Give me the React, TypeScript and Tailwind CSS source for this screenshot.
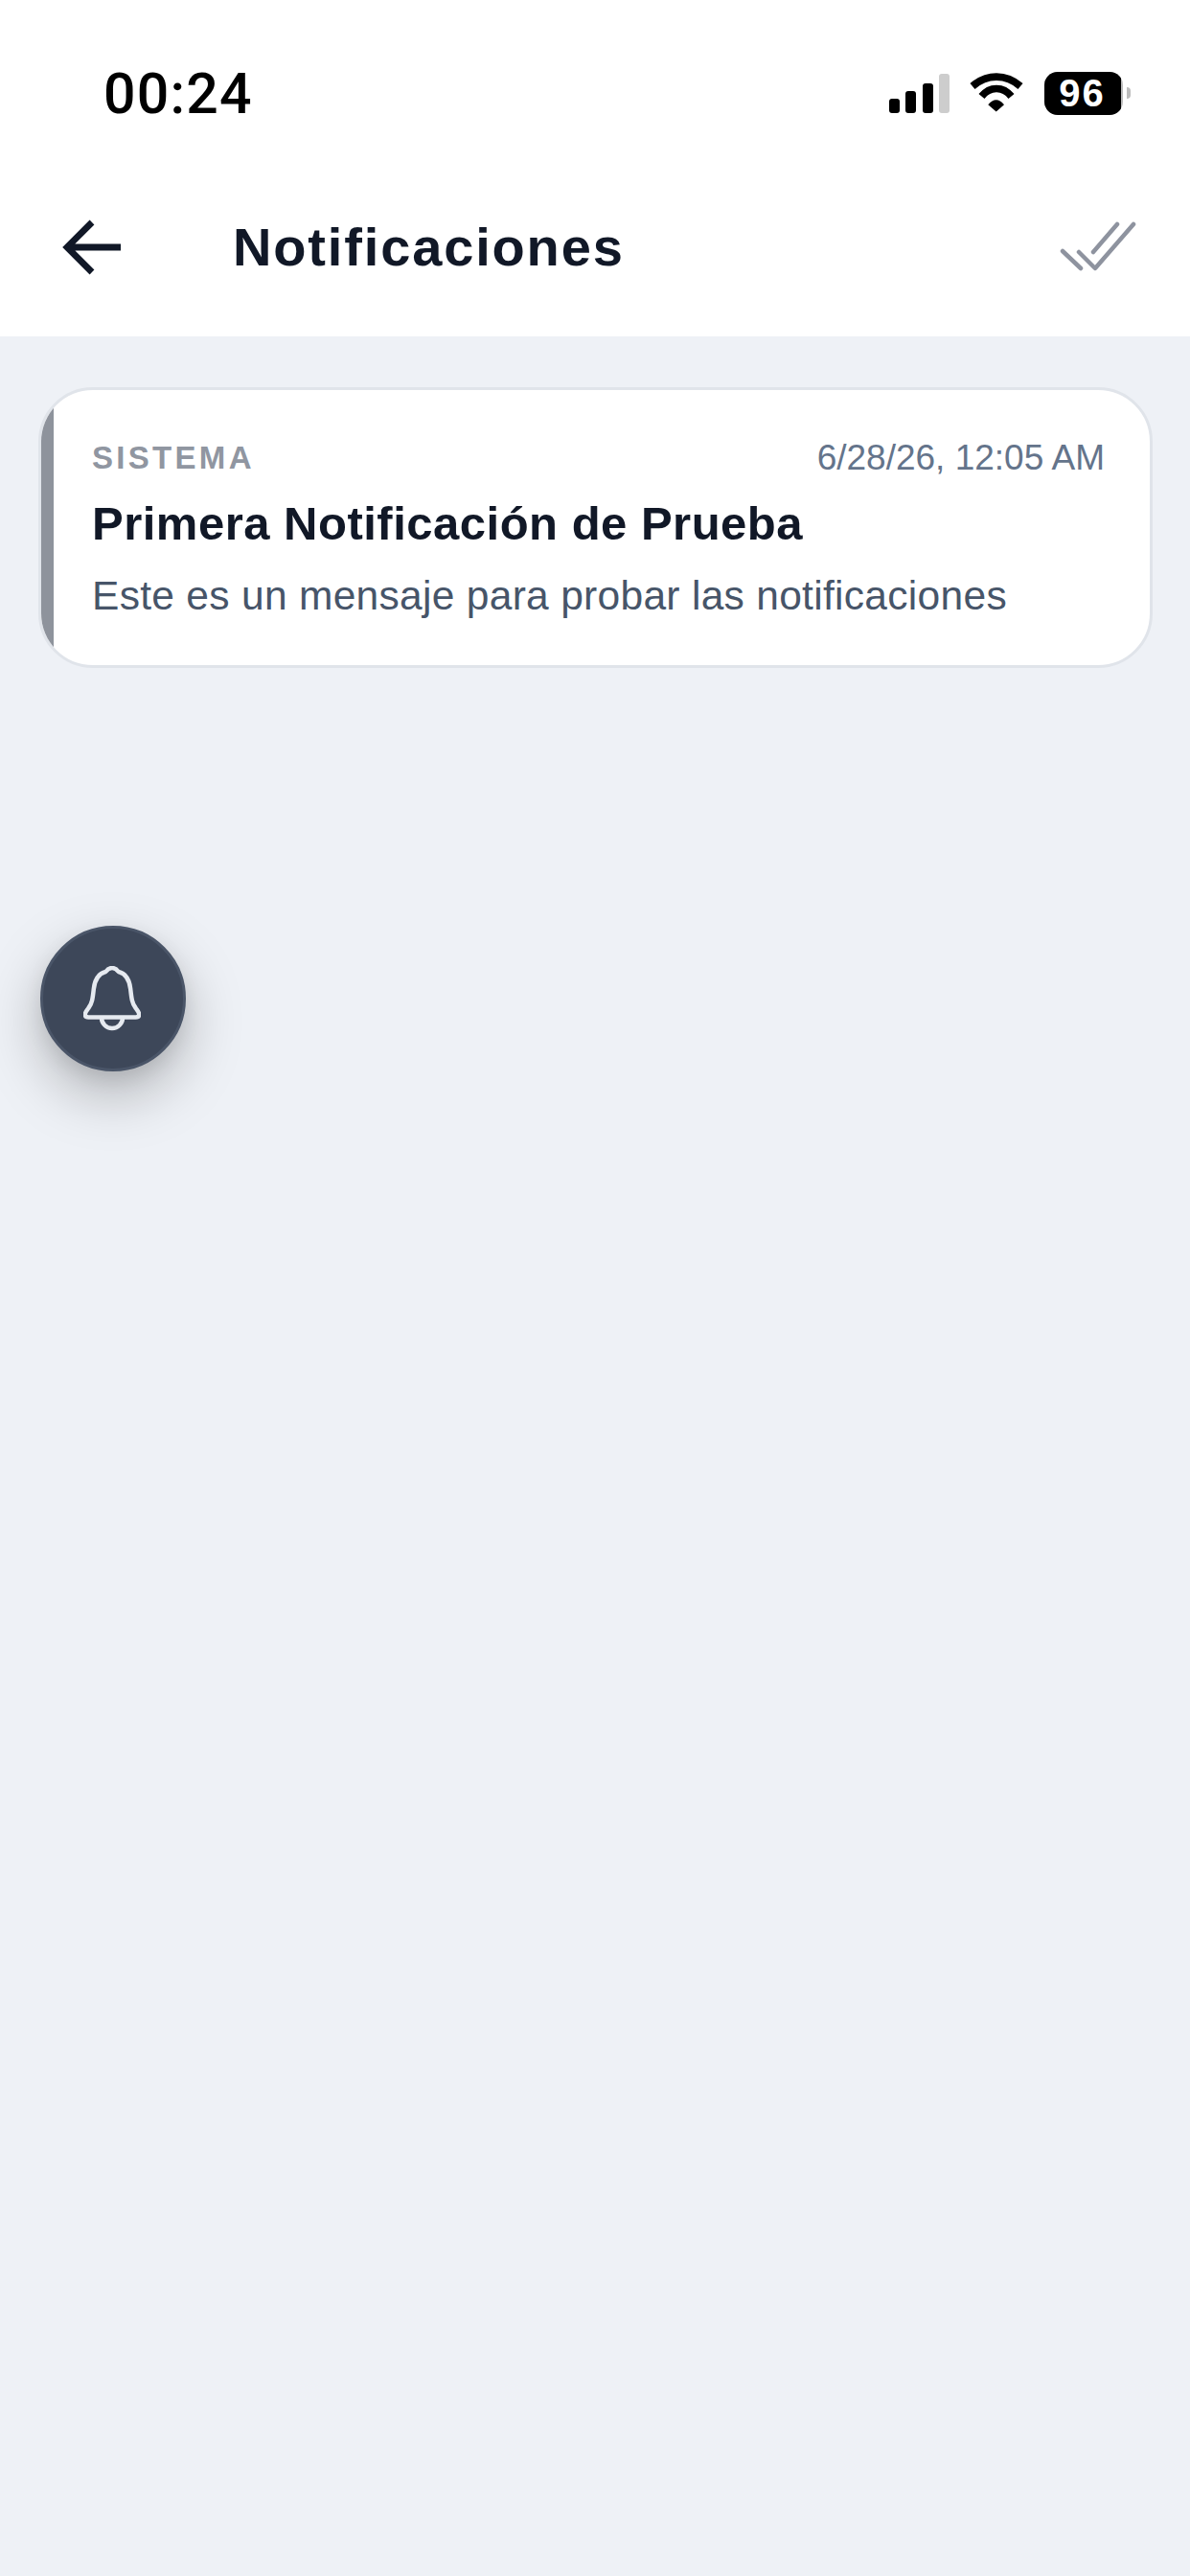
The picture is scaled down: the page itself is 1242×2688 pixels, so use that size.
const sans = 'font-["Liberation_Sans",Arial,sans-serif]'

function StatusBar() {
  return (
    <div className="h-[165px] pt-[29px] pl-[108px] pr-[62px] flex items-center justify-between">
      <span className='font-["Roboto",sans-serif] font-medium text-[59px] leading-none text-black tracking-[1.2px]'>00:24</span>
      <div className="flex items-center">
        {/* señal */}
        <div className="flex items-end gap-[6.33px] h-[41px] mt-[1px]">
          <div className="w-[11px] h-[15px] rounded-[3px] bg-black" />
          <div className="w-[11px] h-[23px] rounded-[3px] bg-black" />
          <div className="w-[11px] h-[31px] rounded-[3px] bg-black" />
          <div className="w-[11px] h-[41px] rounded-[3px] bg-[#cdcdcd]" />
        </div>
        <svg className="ml-[21px]" width="56" height="42" viewBox="0 0 56 42">
          <path d="M3 14 C18 0.8 38 0.8 53 14" fill="none" stroke="#000" strokeWidth="7.7" />
          <path d="M12.5 24.5 C21 13.8 35 13.8 43.5 24.5" fill="none" stroke="#000" strokeWidth="7.7" />
          <path d="M19.3 33.3 Q27.7 23.3 36 33.3 L27.7 40.5 Z" fill="#000" />
        </svg>
        {/* batería */}
        <div className="ml-[22px] flex items-center">
          <div className="relative w-[82px] h-[45px] rounded-[14px] overflow-hidden bg-[#bcbcbc]">
            <div className="h-full w-[80px] bg-black" />
            <span className={`absolute inset-0 flex items-center justify-center pr-[3px] text-white font-bold text-[40px] tracking-[2px] leading-none ${sans}`}>96</span>
          </div>
          <div className="ml-[4px] w-[4px] h-[12px] rounded-r-[4px] bg-[#bcbcbc]" />
        </div>
      </div>
    </div>
  )
}

function NavBar() {
  return (
    <div className="h-[186px] pl-[65px] pr-[55px] flex items-center">
      <svg width="62" height="60" viewBox="0 0 62 60" className="shrink-0">
        <path d="M61 30 H5 M31 4 L5 30 L31 56" fill="none" stroke="#111827" strokeWidth="6.8" />
      </svg>
      <h1 className={`ml-[116px] text-[56px] leading-none font-bold text-[#111827] tracking-[1.85px] ${sans}`}>Notificaciones</h1>
      <svg className="ml-auto shrink-0" width="84" height="56" viewBox="0 0 84 56">
        <path d="M6 32 L25 50 M23 33 L40 50 L80 4 M38 33 L63 4" fill="none" stroke="#8e939f" strokeWidth="4.5" strokeLinecap="round" strokeLinejoin="round" />
      </svg>
    </div>
  )
}

function NotificationCard() {
  return (
    <div className="flex bg-white border-[3px] border-[#e0e4ea] rounded-[57px] overflow-hidden">
      <div className="w-[13px] bg-[#8e939c] shrink-0" />
      <div className={`flex-1 pl-[40px] pr-[47px] pt-[50px] h-[287px] ${sans}`}>
        <div className="flex items-center justify-between h-[40px]">
          <span className="text-[33px] font-bold text-[#9096a1] tracking-[3.3px] leading-none">SISTEMA</span>
          <span className="text-[37px] text-[#64748b] leading-none">6/28/26, 12:05 AM</span>
        </div>
        <div className="mt-[25px] text-[49px] font-bold text-[#111827] tracking-[0.5px] leading-none">Primera Notificación de Prueba</div>
        <div className="mt-[30px] text-[42.5px] text-[#475569] tracking-[0.3px] leading-none">Este es un mensaje para probar las notificaciones</div>
      </div>
    </div>
  )
}

export default function App() {
  return (
    <div className="relative min-h-[2688px] bg-[#eef1f6]">
      <div className="bg-white">
        <StatusBar />
        <NavBar />
      </div>
      <div className="pt-[53px] pl-[40px] pr-[39px]">
        <NotificationCard />
      </div>
      {/* botón flotante de notificaciones */}
      <div className="absolute left-[42px] top-[966px] w-[152px] h-[152px] rounded-full bg-[#3d4759] border-[3px] border-[#4a5568] flex items-center justify-center shadow-[0_24px_60px_rgba(0,0,0,0.26),0_8px_20px_rgba(0,0,0,0.08)]">
        <svg width="60" height="69" viewBox="0 0 59.4 69" className="-ml-[2px]">
          <path
            d="M29.7 2 C26 2 24.5 4 23 6 C15 8 11.5 15 10.5 24 C9.5 33 9 39 5 44 C3.5 46 1.5 48 1.5 50.5 C1.5 52.5 3 53.5 5 53.5 H54.4 C56.4 53.5 57.9 52.5 57.9 50.5 C57.9 48 55.9 46 54.4 44 C50.4 39 49.9 33 48.9 24 C47.9 15 44.4 8 36.4 6 C34.9 4 33.4 2 29.7 2 Z M18.7 54 A11 11 0 0 0 40.7 54"
            fill="none"
            stroke="#e6eaf0"
            strokeWidth="4.5"
            strokeLinejoin="round"
          />
        </svg>
      </div>
    </div>
  )
}
